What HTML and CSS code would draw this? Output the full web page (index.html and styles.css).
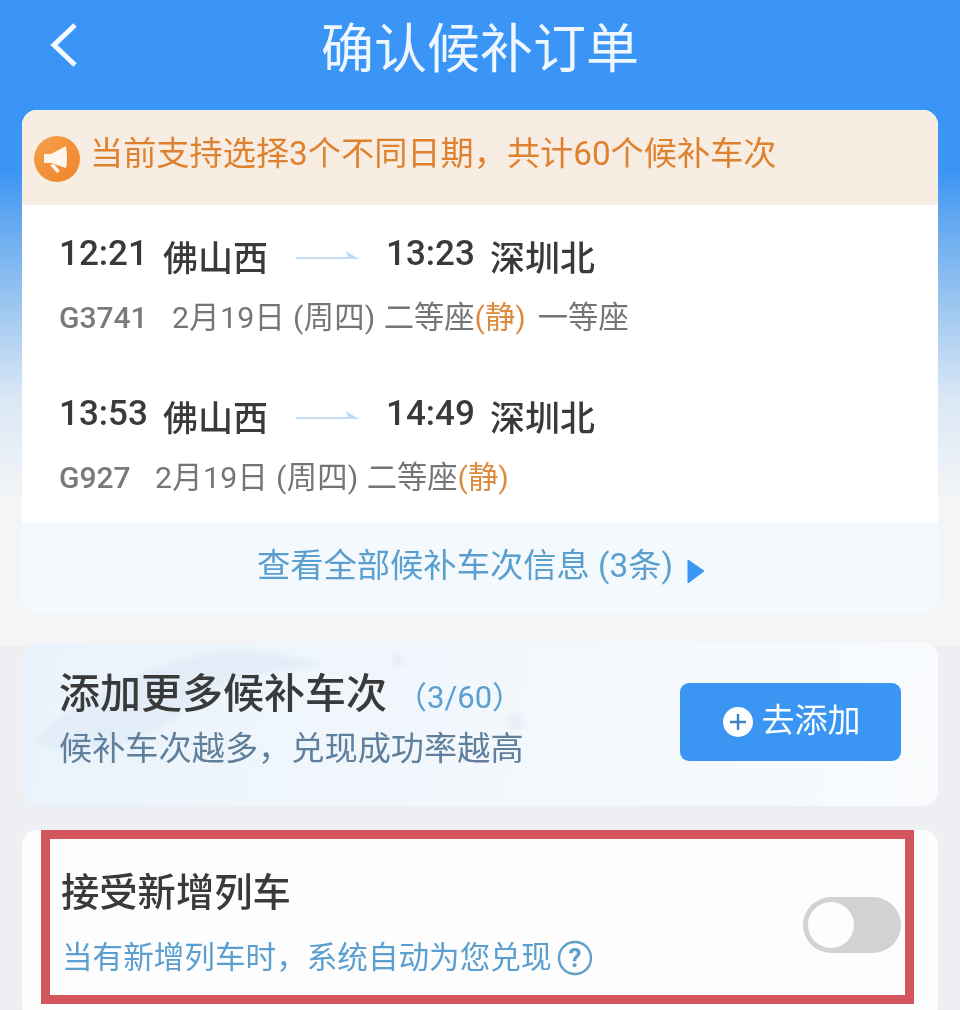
FILE: index.html
```html
<!DOCTYPE html>
<html lang="zh-CN">
<head>
<meta charset="utf-8">
<title>确认候补订单</title>
<link rel="stylesheet" href="styles.css">
</head>
<body>
<div class="page">
  <header class="nav">
    <svg class="back" width="34" height="46" viewBox="0 0 34 46"><path d="M28 3 L7 23 L28 43" fill="none" stroke="#f4faff" stroke-width="5"/></svg>
    <h1 class="nav-title">确认候补订单</h1>
  </header>
  <main class="cards">
    <section class="card order">
      <div class="notice">
        <svg class="notice-icon" width="46" height="46" viewBox="0 0 46 46">
          <defs><linearGradient id="ng" x1="0" y1="0" x2="1" y2="1"><stop offset="0" stop-color="#f5a04e"/><stop offset="1" stop-color="#ee8428"/></linearGradient></defs>
          <circle cx="23" cy="23" r="23" fill="url(#ng)"/>
          <path d="M10 18 H17 L32 10 Q34 22 32 32 L17 27 H10 Z" fill="#fff5ea"/>
          <path d="M16 29 L23 37 L26 35 L20 28 Z" fill="#fff5ea"/>
        </svg>
        <span>当前支持选择3个不同日期，共计60个候补车次</span>
      </div>
      <div class="train">
        <div class="route">
          <span class="time">12:21</span><span class="station">佛山西</span>
          <svg class="arrow" width="64" height="14" viewBox="0 0 64 14"><path d="M0 10 H63 L50 2 L52 8 H0 Z" fill="#c3dcf2"/></svg>
          <span class="time">13:23</span><span class="station">深圳北</span>
        </div>
        <div class="meta"><b class="code">G3741</b><span class="date">2月19日 (周四)</span><span>二等座<em>(静)</em></span><span>一等座</span></div>
      </div>
      <div class="train">
        <div class="route">
          <span class="time">13:53</span><span class="station">佛山西</span>
          <svg class="arrow" width="64" height="14" viewBox="0 0 64 14"><path d="M0 10 H63 L50 2 L52 8 H0 Z" fill="#c3dcf2"/></svg>
          <span class="time">14:49</span><span class="station">深圳北</span>
        </div>
        <div class="meta"><b class="code short">G927</b><span class="date">2月19日 (周四)</span><span>二等座<em>(静)</em></span></div>
      </div>
      <div class="more">
        <span>查看全部候补车次信息 (3条)</span>
        <svg class="more-arrow" width="18" height="26" viewBox="0 0 18 26"><path d="M1 2 L17 13 L1 25 Z" fill="#3b95f3" stroke="#3b95f3" stroke-linejoin="round"/></svg>
      </div>
    </section>

    <section class="card add">
      <svg class="swirl" width="520" height="164" viewBox="0 0 520 164">
        <path d="M12 96 C50 60 110 30 170 14 C210 4 260 10 300 24 C250 26 200 40 170 62 C140 90 90 112 40 108 C24 106 14 102 12 96 Z" fill="#e3edf8"/>
        <circle cx="375" cy="19" r="6" fill="#e6edf6"/>
        <circle cx="492" cy="80" r="8" fill="#e8eff7"/>
      </svg>
      <div class="add-text">
        <div class="add-head"><span class="add-title">添加更多候补车次</span><span class="add-count">（3/60）</span></div>
        <div class="add-sub">候补车次越多，兑现成功率越高</div>
      </div>
      <div class="add-btn">
        <svg class="add-icon" width="30" height="30" viewBox="0 0 30 30"><circle cx="15" cy="15" r="15" fill="#fff"/><path d="M15 7 V23 M7 15 H23" stroke="#3d80c4" stroke-width="2.4"/></svg>
        <span>去添加</span>
      </div>
    </section>

    <section class="card accept">
      <div class="accept-text">
        <div class="accept-title">接受新增列车</div>
        <div class="accept-sub">
          <span>当有新增列车时，系统自动为您兑现</span>
          <svg width="36" height="36" viewBox="0 0 36 36"><circle cx="18" cy="18" r="16" fill="none" stroke="#5f9fc8" stroke-width="2.4"/><text x="18" y="27" text-anchor="middle" class="q">?</text></svg>
        </div>
      </div>
      <div class="toggle"><div class="knob"></div></div>
      <div class="mark"></div>
    </section>
  </main>
</div>
</body>
</html>
```
FILE: styles.css
```css
* { box-sizing: border-box; }
html, body { margin: 0; padding: 0; }
body {
  width: 960px;
  height: 1010px;
  overflow: hidden;
  font-family: Roboto, "Noto Sans CJK SC", sans-serif;
}
.page {
  height: 1010px;
  filter: blur(0.4px);
  background: linear-gradient(180deg, #3b95f6 0, #3b95f6 170px, #5fa6f1 215px, #a6cbf0 320px, #dbe8f5 400px, #f3f5f7 500px, #f5f5f6 645px, #eeeff3 646px, #eeeff3 100%);
}
.nav {
  height: 110px;
  position: relative;
  display: flex;
  align-items: center;
  justify-content: center;
  padding-bottom: 10px;
}
.back { position: absolute; left: 47px; top: 22px; }
.nav-title {
  margin: 0;
  font-size: 53px;
  font-weight: 400;
  line-height: 60px;
  color: #eef7ff;
}
.cards {
  display: flex;
  flex-direction: column;
  gap: 29px;
  padding: 0 22px;
}
.card {
  background: #fff;
  border-radius: 15px;
  overflow: hidden;
}
.order { height: 503px; }
.notice {
  height: 95px;
  background: #f8ede2;
  display: flex;
  align-items: center;
  gap: 10px;
  padding: 0 0 14px 12px;
  font-size: 33.2px;
  color: #de8230;
}
.notice-icon { margin-top: 16px; flex: none; }
.train { height: 160px; padding: 28px 0 0 38px; }
.train + .train { height: 158px; }
.route {
  display: grid;
  grid-template-columns: 103px 133px 91px 103px auto;
  align-items: center;
  height: 46px;
}
.time {
  font-size: 35px;
  font-weight: 500;
  color: #3a3a3a;
  line-height: 40px;
  margin-top: -8px;
  margin-left: -1px;
}
.station {
  font-size: 35px;
  color: #3a3a3a;
  line-height: 46px;
  font-weight: 500;
  margin-top: 4px;
}
.arrow { margin-top: -4px; }
.meta {
  margin-top: 17px;
  display: flex;
  align-items: center;
  gap: 12px;
  font-size: 30.3px;
  line-height: 44px;
  color: #757575;
}
.code { width: 100px; font-weight: 500; color: #7a7a7a; font-size: 30px; margin-left: -1px; }
.code.short { width: 83px; }
.date { letter-spacing: .3px; margin-left: 1px; margin-right: -4px; }
.meta em { font-style: normal; color: #dd8a3c; }
.more {
  height: 90px;
  background: #f4f9fd;
  display: flex;
  justify-content: center;
  align-items: center;
  gap: 14px;
  padding: 0 0 12px 2px;
  font-size: 33.3px;
  color: #5a9fcf;
}
.more-arrow { margin-top: 18px; }
.add {
  position: relative;
  height: 164px;
  margin-left: 1px;
  background: linear-gradient(100deg, #eaf3fb 0, #f1f7fc 45%, #f9fbfd 100%);
  display: flex;
  justify-content: space-between;
  align-items: flex-start;
  padding: 41px 37px 0 36px;
}
.swirl { position: absolute; left: 0; top: 0; filter: blur(2px); }
.add-text { position: relative; }
.add-head { display: flex; align-items: center; height: 46px; margin-top: -16px; }
.add-title { font-size: 41px; font-weight: 500; color: #3a3a3a; }
.add-count { font-size: 31px; color: #5a9fcf; margin-left: 9px; margin-top: 9px; }
.add-sub { font-size: 33.2px; line-height: 44px; color: #5f7f9c; margin-top: 14px; }
.add-btn {
  position: relative;
  width: 221px;
  height: 78px;
  background: #3b95f3;
  border-radius: 9px;
  display: flex;
  align-items: center;
  justify-content: center;
  gap: 9px;
  padding-bottom: 9px;
  font-size: 33px;
  color: #fff;
}
.add-icon { margin-top: 9px; margin-left: 2px; }
.accept {
  position: relative;
  height: 190px;
  margin-top: -5px;
  display: flex;
  justify-content: space-between;
  align-items: flex-start;
  padding: 38px 37px 0 40px;
  background: #fdfdfe;
}
.accept-title { font-size: 38.3px; line-height: 50px; color: #3a3a3a; font-weight: 500; margin-left: -1px; }
.accept-sub {
  display: flex;
  align-items: center;
  gap: 5px;
  margin-top: 20px;
  font-size: 30.6px;
  line-height: 40px;
  color: #5a9fcf;
}
.q { font-size: 26px; font-weight: 700; fill: #5f9fc8; font-family: Roboto, sans-serif; }
.toggle {
  width: 98px;
  height: 56px;
  border-radius: 28px;
  background: #d2d2d2;
  padding: 5px;
  margin-top: 29px;
}
.knob { width: 46px; height: 46px; border-radius: 50%; background: #fdfdfd; }
.mark {
  position: absolute;
  left: 19px;
  top: 0;
  width: 873px;
  height: 174px;
  border: 9px solid #d3565c;
}
```
